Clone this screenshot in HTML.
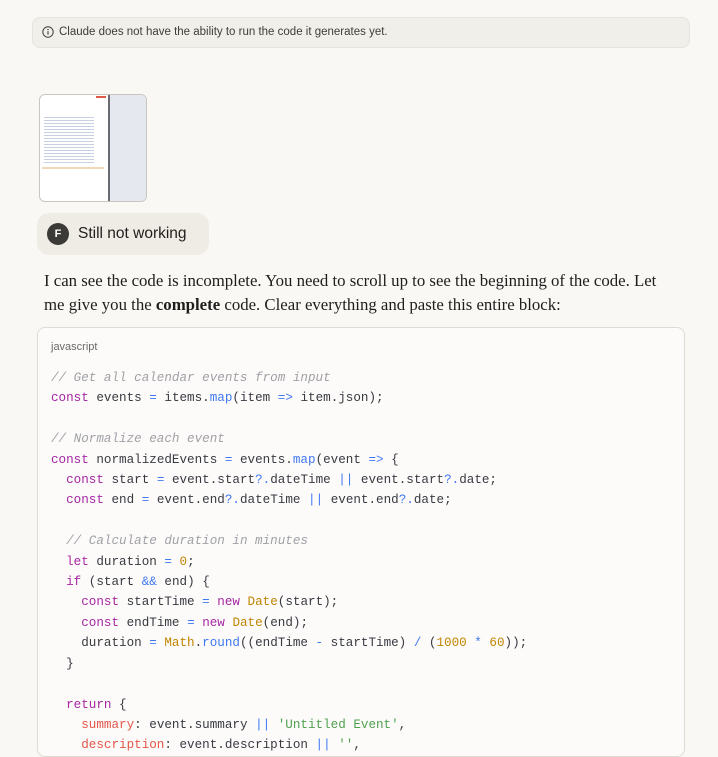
<!DOCTYPE html>
<html><head><meta charset="utf-8"><style>
body{margin:0;background:#f9f8f5;width:718px;height:743px;overflow:hidden;position:relative;font-family:"Liberation Sans",sans-serif;}
.note{position:absolute;left:32px;top:17px;width:658px;height:31px;background:#f1efe9;border:1px solid #e6e3dc;border-radius:8px;box-sizing:border-box;font-size:11.5px;color:#3d3d3a;line-height:29px;padding-left:26px;}
.note svg{position:absolute;left:9px;top:8px}
.thumb{position:absolute;left:39px;top:94px;width:108px;height:108px;border:1px solid #c9c6bf;border-radius:6px;overflow:hidden;background:#fff;box-sizing:border-box}
.thumb .r{position:absolute;left:68px;top:0;width:40px;height:108px;background:#e6e8f0;border-left:2px solid #6a6a70}
.msg{position:absolute;left:37px;top:213px;width:172px;height:42px;background:#efece5;border-radius:12px;}
.av{position:absolute;left:10px;top:10px;width:22px;height:22px;border-radius:50%;background:#3b3a37;color:#fff;font-size:11px;font-weight:bold;text-align:center;line-height:22px}
.msg span{position:absolute;left:41px;top:12px;font-size:15.5px;color:#1f1e1d}
.p{position:absolute;left:44px;top:269px;width:622px;font-family:"Liberation Serif",serif;font-size:16.8px;line-height:24px;color:#1f1e1d}
.code{position:absolute;left:37px;top:327px;width:648px;height:430px;background:#fcfbf9;border:1px solid #dedbd3;border-radius:8px;box-sizing:border-box}
.lang{position:absolute;left:13px;top:13px;font-size:11px;color:#6b6a66}
pre{position:absolute;left:13px;top:40px;margin:0;font-family:"Liberation Mono",monospace;font-size:12.6px;line-height:20.4px;color:#383a42}
.c{color:#a0a1a7;font-style:italic}.k{color:#a626a4}.o{color:#4078f2}.f{color:#4078f2}.n{color:#c18401}.s{color:#50a14f}.pr{color:#e45649}
</style></head><body>
<div class="note"><svg width="12" height="12" viewBox="0 0 12 12"><circle cx="6" cy="6" r="5.2" fill="none" stroke="#3d3d3a" stroke-width="1"/><path d="M6 5.2v3.4" stroke="#3d3d3a" stroke-width="1.1"/><circle cx="6" cy="3.6" r=".7" fill="#3d3d3a"/></svg>Claude does not have the ability to run the code it generates yet.</div>
<div class="thumb"><div style="position:absolute;left:56px;top:1px;width:10px;height:2px;background:#e05a4a"></div>
<div style="position:absolute;left:4px;top:20px;width:50px;height:50px;background:repeating-linear-gradient(#fff 0 2px,#c8d0e4 2px 3px)"></div>
<div style="position:absolute;left:2px;top:72px;width:62px;height:2px;background:#f2d8b8"></div>
<div class="r"></div></div>
<div class="msg"><div class="av">F</div><span>Still not working</span></div>
<div class="p">I can see the code is incomplete. You need to scroll up to see the beginning of the code. Let me give you the <b>complete</b> code. Clear everything and paste this entire block:</div>
<div class="code"><div class="lang">javascript</div>
<pre><span class="c">// Get all calendar events from input</span>
<span class="k">const</span> events <span class="o">=</span> items.<span class="f">map</span>(item <span class="o">=&gt;</span> item.json);

<span class="c">// Normalize each event</span>
<span class="k">const</span> normalizedEvents <span class="o">=</span> events.<span class="f">map</span>(event <span class="o">=&gt;</span> {
  <span class="k">const</span> start <span class="o">=</span> event.start<span class="o">?.</span>dateTime <span class="o">||</span> event.start<span class="o">?.</span>date;
  <span class="k">const</span> end <span class="o">=</span> event.end<span class="o">?.</span>dateTime <span class="o">||</span> event.end<span class="o">?.</span>date;

  <span class="c">// Calculate duration in minutes</span>
  <span class="k">let</span> duration <span class="o">=</span> <span class="n">0</span>;
  <span class="k">if</span> (start <span class="o">&amp;&amp;</span> end) {
    <span class="k">const</span> startTime <span class="o">=</span> <span class="k">new</span> <span class="n">Date</span>(start);
    <span class="k">const</span> endTime <span class="o">=</span> <span class="k">new</span> <span class="n">Date</span>(end);
    duration <span class="o">=</span> <span class="n">Math</span>.<span class="f">round</span>((endTime <span class="o">-</span> startTime) <span class="o">/</span> (<span class="n">1000</span> <span class="o">*</span> <span class="n">60</span>));
  }

  <span class="k">return</span> {
    <span class="pr">summary</span>: event.summary <span class="o">||</span> <span class="s">'Untitled Event'</span>,
    <span class="pr">description</span>: event.description <span class="o">||</span> <span class="s">''</span>,</pre></div>
</body></html>
